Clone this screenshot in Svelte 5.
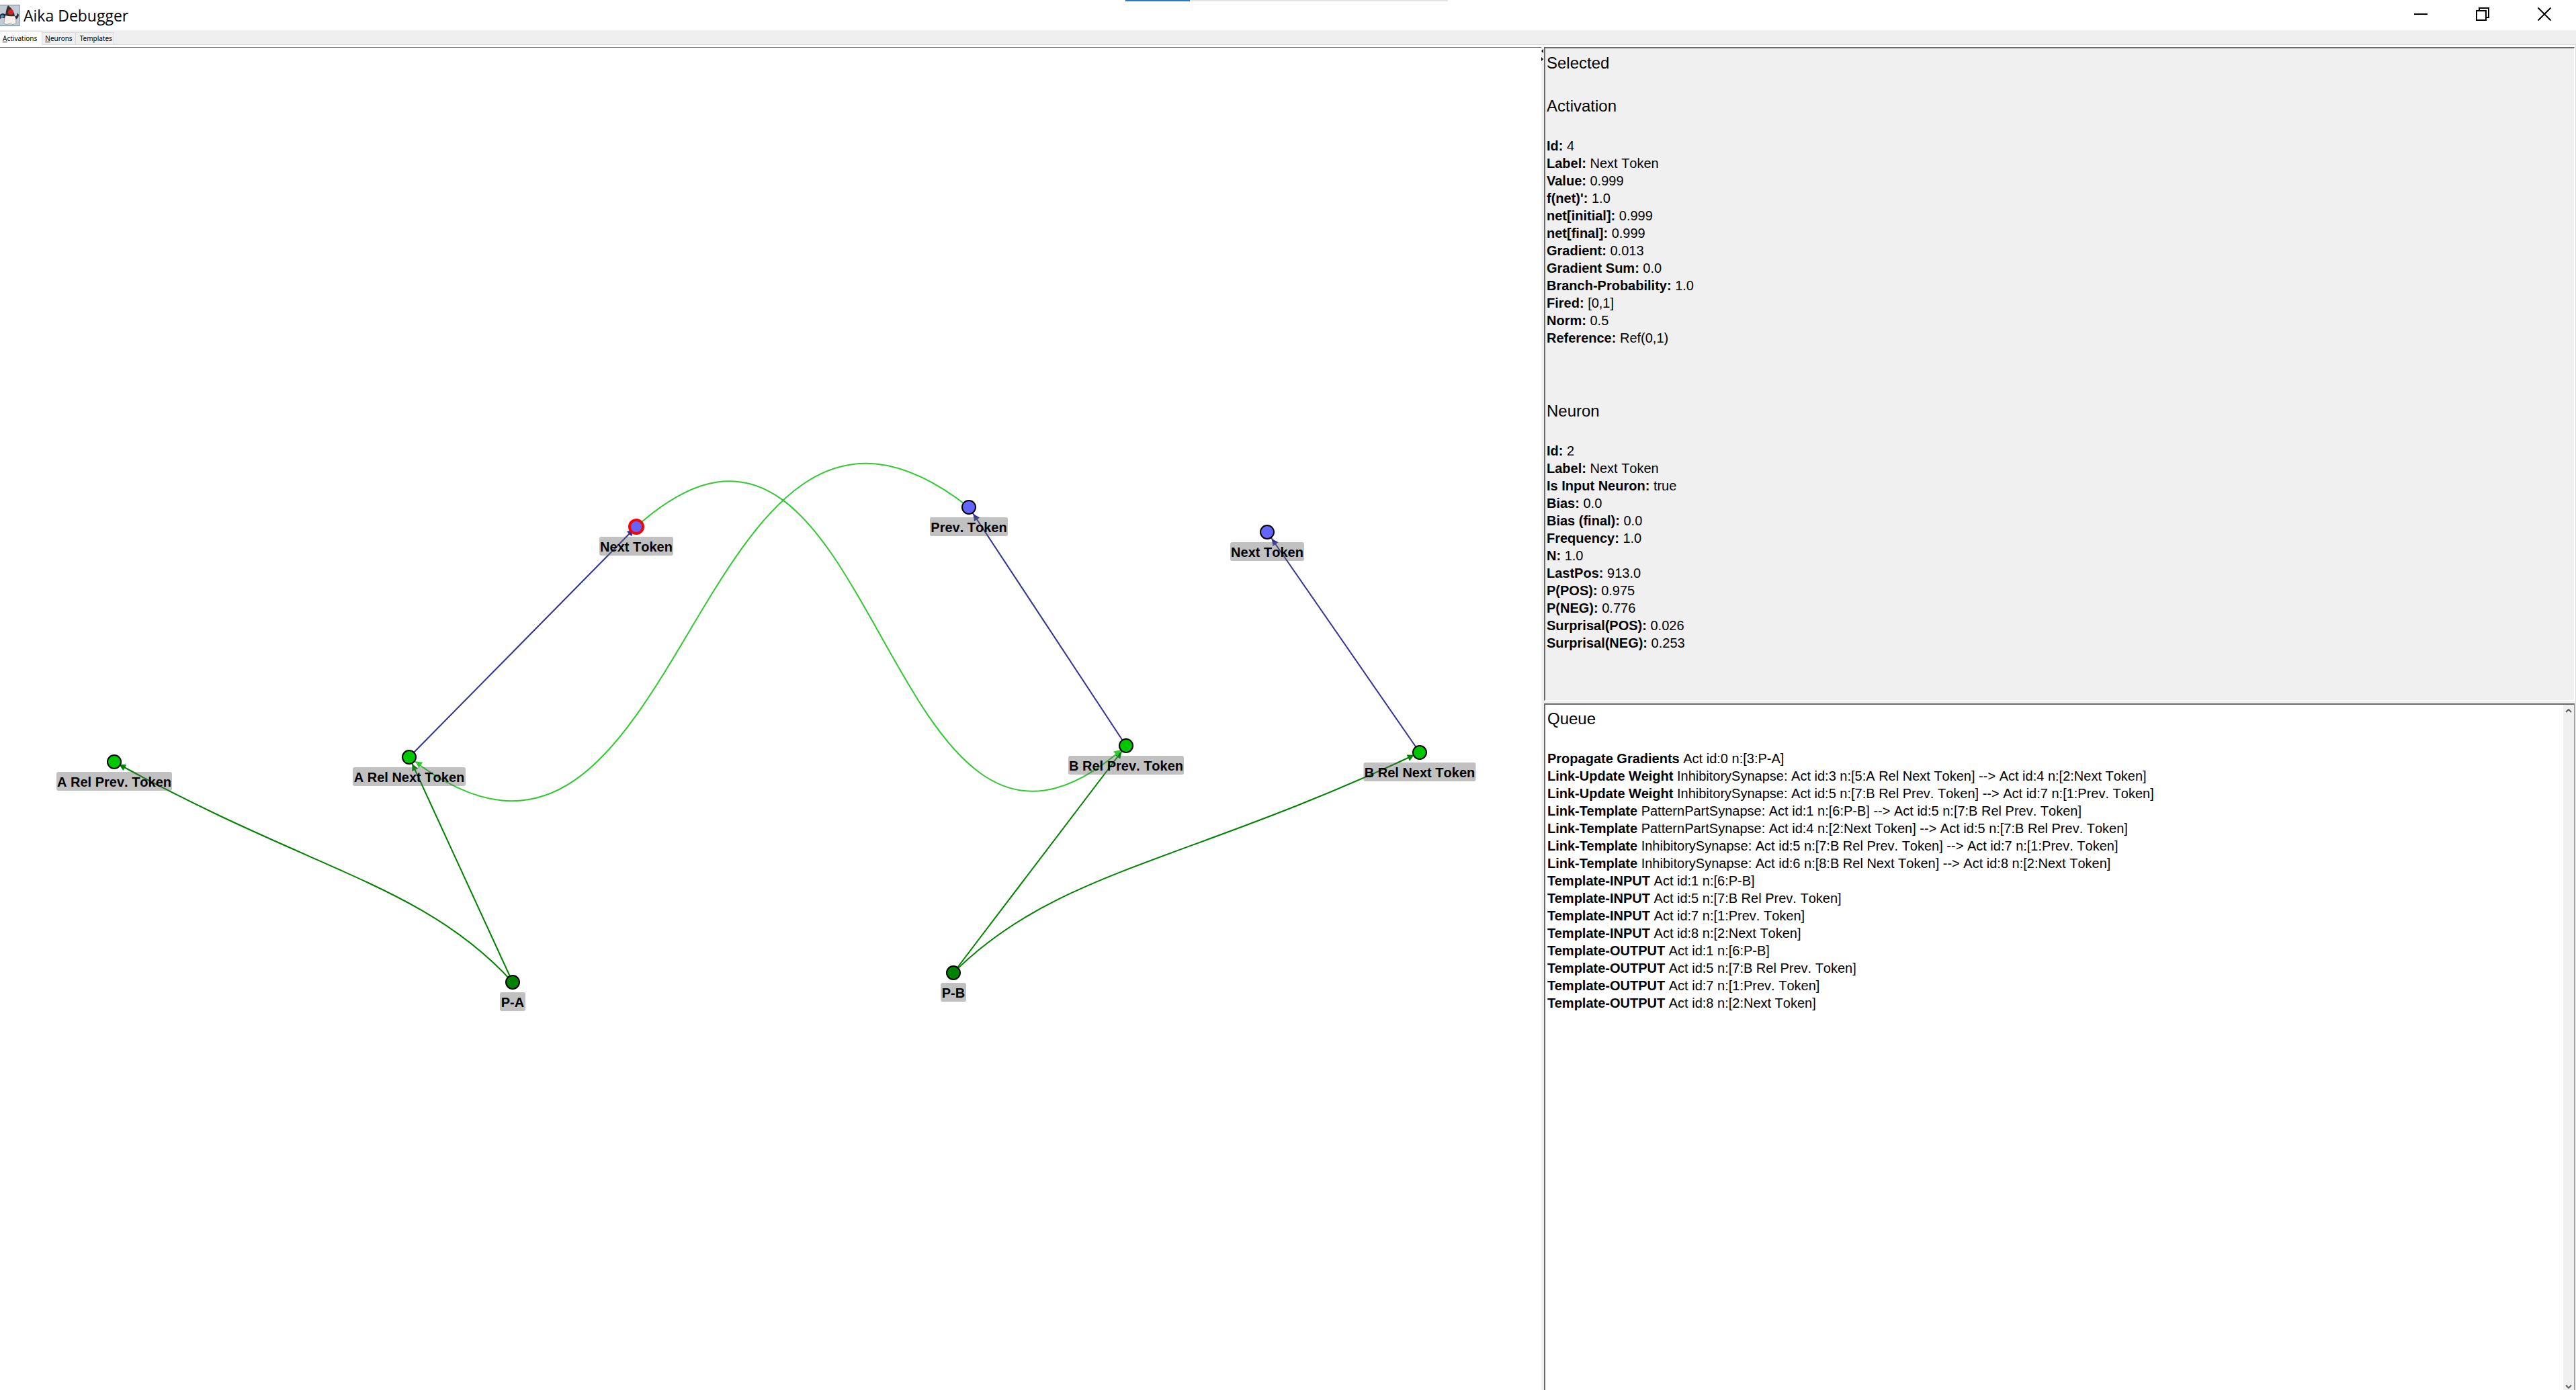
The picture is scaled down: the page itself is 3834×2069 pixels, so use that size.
<script>
  const tabs = ['Activations', 'Neurons', 'Templates'];
  const activation = [
    ['Id:', '4'], ['Label:', 'Next Token'], ['Value:', '0.999'], ["f(net)':", '1.0'],
    ['net[initial]:', '0.999'], ['net[final]:', '0.999'], ['Gradient:', '0.013'],
    ['Gradient Sum:', '0.0'], ['Branch-Probability:', '1.0'], ['Fired:', '[0,1]'],
    ['Norm:', '0.5'], ['Reference:', 'Ref(0,1)']
  ];
  const neuron = [
    ['Id:', '2'], ['Label:', 'Next Token'], ['Is Input Neuron:', 'true'], ['Bias:', '0.0'],
    ['Bias (final):', '0.0'], ['Frequency:', '1.0'], ['N:', '1.0'], ['LastPos:', '913.0'],
    ['P(POS):', '0.975'], ['P(NEG):', '0.776'], ['Surprisal(POS):', '0.026'],
    ['Surprisal(NEG):', '0.253']
  ];
  const queue = [
    ['Propagate Gradients', 'Act id:0 n:[3:P-A]'],
    ['Link-Update Weight', 'InhibitorySynapse: Act id:3 n:[5:A Rel Next Token] --> Act id:4 n:[2:Next Token]'],
    ['Link-Update Weight', 'InhibitorySynapse: Act id:5 n:[7:B Rel Prev. Token] --> Act id:7 n:[1:Prev. Token]'],
    ['Link-Template', 'PatternPartSynapse: Act id:1 n:[6:P-B] --> Act id:5 n:[7:B Rel Prev. Token]'],
    ['Link-Template', 'PatternPartSynapse: Act id:4 n:[2:Next Token] --> Act id:5 n:[7:B Rel Prev. Token]'],
    ['Link-Template', 'InhibitorySynapse: Act id:5 n:[7:B Rel Prev. Token] --> Act id:7 n:[1:Prev. Token]'],
    ['Link-Template', 'InhibitorySynapse: Act id:6 n:[8:B Rel Next Token] --> Act id:8 n:[2:Next Token]'],
    ['Template-INPUT', 'Act id:1 n:[6:P-B]'],
    ['Template-INPUT', 'Act id:5 n:[7:B Rel Prev. Token]'],
    ['Template-INPUT', 'Act id:7 n:[1:Prev. Token]'],
    ['Template-INPUT', 'Act id:8 n:[2:Next Token]'],
    ['Template-OUTPUT', 'Act id:1 n:[6:P-B]'],
    ['Template-OUTPUT', 'Act id:5 n:[7:B Rel Prev. Token]'],
    ['Template-OUTPUT', 'Act id:7 n:[1:Prev. Token]'],
    ['Template-OUTPUT', 'Act id:8 n:[2:Next Token]']
  ];

  // Canvas coordinates start below the tab strip.
  const nodes = [
    { x: 170, y: 1063, w: 172, label: 'A Rel Prev. Token', kind: 'part' },
    { x: 609, y: 1056, w: 168, label: 'A Rel Next Token', kind: 'part' },
    { x: 763, y: 1391, w: 38, label: 'P-A', kind: 'pattern' },
    { x: 947, y: 713, w: 110, label: 'Next Token', kind: 'input selected' },
    { x: 1442, y: 684, w: 116, label: 'Prev. Token', kind: 'input' },
    { x: 1419, y: 1377, w: 38, label: 'P-B', kind: 'pattern' },
    { x: 1676, y: 1039, w: 172, label: 'B Rel Prev. Token', kind: 'part' },
    { x: 1886, y: 721, w: 110, label: 'Next Token', kind: 'input' },
    { x: 2113, y: 1049, w: 167, label: 'B Rel Next Token', kind: 'part' }
  ];
  const edges = [
    { kind: 'blue', from: [609, 1056], to: [947, 713], gap: 5 },
    { kind: 'blue', from: [1676, 1039], to: [1442, 684], gap: 12 },
    { kind: 'blue', from: [2113, 1049], to: [1886, 721], gap: 12 },
    { kind: 'green', from: [763, 1391], to: [609, 1056], gap: 11 },
    { kind: 'green', from: [763, 1391], to: [170, 1063], via: [630, 1245, 467, 1227], gap: 8 },
    { kind: 'green', from: [1419, 1377], to: [1676, 1039], gap: 11 },
    { kind: 'green', from: [1419, 1377], to: [2113, 1049], via: [1572, 1224, 1766, 1213], gap: 9 },
    { kind: 'lime', from: [947, 713], to: [1676, 1039], via: [1311, 386, 1311, 1366], gap: 10 },
    { kind: 'lime', from: [1442, 684], to: [609, 1056], via: [1025, 357, 1025, 1383], gap: 11 }
  ].map((e) => {
    const [x0, y0] = e.from;
    const [x1, y1] = e.to;
    const v = e.via ?? [x0, y0, x1, y1];
    const bx = e.via ? v[2] : x0;
    const by = e.via ? v[3] : y0;
    const t = 0.96;
    let ang = Math.atan2(y1 - by, x1 - bx);
    if (e.kind === 'lime') {
      const u = 1 - t;
      const px = u * u * u * x0 + 3 * u * u * t * v[0] + 3 * u * t * t * v[2] + t * t * t * x1;
      const py = u * u * u * y0 + 3 * u * u * t * v[1] + 3 * u * t * t * v[3] + t * t * t * y1;
      ang = Math.atan2(y1 - py, x1 - px);
    }
    const pt = (d, s) =>
      `${x1 - d * Math.cos(ang) - s * Math.sin(ang)} ${y1 - d * Math.sin(ang) + s * Math.cos(ang)}`;
    return {
      kind: e.kind,
      d: e.via
        ? `M${x0} ${y0}C${v[0]} ${v[1]} ${v[2]} ${v[3]} ${x1} ${y1}`
        : `M${x0} ${y0}L${x1} ${y1}`,
      arrow: `M${pt(e.gap, 0)}L${pt(e.gap + 10, 5)}L${pt(e.gap + 10, -5)}Z`
    };
  });
</script>

{#snippet fields(rows)}
  <dl>
    {#each rows as [name, value]}
      <div><dt>{name}</dt> <dd>{value}</dd></div>
    {/each}
  </dl>
{/snippet}

<div class="window">
  <header>
    <svg class="logo" viewBox="0 0 30 32" width="30" height="32" aria-hidden="true">
      <rect x="-2" y="0.5" width="31" height="31" fill="#c3ccd6" stroke="#6d8296" />
      <path d="M0 15Q4 11 9 15L8 21Q4 18 0 21Z" fill="#1d2b38" />
      <path d="M1 16L5 15L6 18L1 20Z" fill="#4f93c8" />
      <path d="M20 16Q25 20 26 12L28 15Q27 23 20 22Z" fill="#2a2a2a" />
      <path d="M9 14Q6 20 6 28Q10 31 14 28Q19 31 24 28Q25 21 20 13Z" fill="#f2f1ed" stroke="#777" stroke-width="0.6" />
      <path d="M12 1Q9 6 8 16Q14 18 22 17Q21 8 12 1Z" fill="#30302e" />
      <circle cx="16" cy="11" r="4" fill="#dd1f22" />
    </svg>
    <h1>Aika Debugger</h1>
    <div class="progress"><span></span></div>
    <div class="controls">
      <button aria-label="Minimize"><svg viewBox="0 0 20 20" width="20" height="20"><path d="M0 10H20" /></svg></button>
      <button aria-label="Restore"><svg viewBox="0 0 20 20" width="20" height="20"><path d="M1 5H15V19H1ZM5 5V1H19V15H15" /></svg></button>
      <button aria-label="Close"><svg viewBox="0 0 20 20" width="20" height="20"><path d="M0.500 0.500L19.500 19.500M19.500 0.500L0.500 19.500" /></svg></button>
    </div>
  </header>

  <div class="tabs" role="tablist">
    {#each tabs as tab, i}
      <button role="tab" aria-selected={i === 0} class:active={i === 0}>
        {#if i < 2}<u>{tab[0]}</u>{tab.slice(1)}{:else}{tab}{/if}
      </button>
    {/each}
  </div>

  <main>
    <section class="graph" aria-label="Activation graph">
      <svg class="edges" aria-hidden="true">
        {#each edges as e}
          <g class={e.kind}>
            <path class="line" d={e.d} />
            <path class="arrow" d={e.arrow} />
          </g>
        {/each}
      </svg>
      {#each nodes as n}
        <div class="node {n.kind}" style="left:{n.x}px;top:{n.y}px">
          <i></i>
          <span style="width:{n.w}px">{n.label}</span>
        </div>
      {/each}
    </section>
    <div class="divider">
      <svg viewBox="0 0 3 20" width="3" height="20" aria-hidden="true"><path d="M3 0V6L0 3ZM0 12V18L3 15Z" /></svg>
    </div>
    <div class="side">
      <section class="details">
        <h2>Selected</h2>
        <h2>Activation</h2>
        {@render fields(activation)}
        <h2 class="spaced">Neuron</h2>
        {@render fields(neuron)}
      </section>
      <section class="queue">
        <div class="content">
          <h2>Queue</h2>
          {@render fields(queue)}
        </div>
        <div class="scroll" aria-hidden="true">
          <svg viewBox="0 0 10 6" width="10" height="6"><path d="M1 5L5 1L9 5" /></svg>
          <svg viewBox="0 0 10 6" width="10" height="6"><path d="M1 1L5 5L9 1" /></svg>
        </div>
      </section>
    </div>
  </main>
</div>

<style>
  :global(body) { background: #fff; }
  .window {
    height: 100vh;
    display: flex;
    flex-direction: column;
    overflow: hidden;
    font-family: 'Liberation Sans', Arial, sans-serif;
    color: #000;
  }
  header {
    position: relative;
    display: flex;
    align-items: center;
    height: 45px;
    padding-right: 1px;
    flex: none;
  }
  .logo { display: block; }
  h1 {
    margin: 0 0 0 5px;
    font: 400 23px/32px 'Open Sans', 'Noto Sans', sans-serif;
    flex: 1;
  }
  .progress {
    position: absolute;
    top: 0;
    left: 1675px;
    width: 480px;
    height: 2px;
    background: #e3e3e3;
  }
  .progress span { display: block; width: 96px; height: 2px; background: #2b78c8; }
  .controls { display: flex; align-self: flex-start; }
  .controls button {
    width: 92px;
    height: 42px;
    padding: 0;
    border: 0;
    background: none;
    display: grid;
    place-items: center;
  }
  .controls path { fill: none; stroke: #000; stroke-width: 2; }
  .tabs {
    display: flex;
    align-items: flex-end;
    height: 21px;
    flex: none;
    background: #efefef;
    border-bottom: 1px solid #d9d9d9;
  }
  .tabs button {
    height: 18px;
    padding: 0 4px;
    border: 1px solid #d9d9d9;
    border-left: 0;
    border-bottom: 0;
    background: #f0f0f0;
    font: 10px/17px 'Noto Sans', sans-serif;
    color: #000;
  }
  .tabs button:last-child { padding-left: 6px; padding-right: 2px; }
  .tabs .active {
    height: 21px;
    margin-bottom: -1px;
    padding-right: 7px;
    background: #fff;
  }
  main {
    flex: 1;
    min-height: 0;
    display: flex;
    padding: 3px 1px 0 0;
    border-right: 1px solid #d9d9d9;
  }
  .graph {
    position: relative;
    flex: 2294;
    min-width: 0;
    border-top: 1px solid #696969;
    overflow: hidden;
  }
  .edges { display: block; width: 100%; height: 100%; }
  .line { fill: none; stroke-width: 2; }
  .blue .line { stroke: #323296; }
  .green .line { stroke: #008200; }
  .lime .line { stroke: #32c832; }
  .blue .arrow { fill: #323296; }
  .green .arrow { fill: #008200; }
  .lime .arrow { fill: #32c832; }
  .node { position: absolute; width: 0; height: 0; }
  .node i {
    position: absolute;
    left: -11px;
    top: -11px;
    width: 18px;
    height: 18px;
    border: 2px solid #000;
    border-radius: 50%;
  }
  .part i { background: #00c800; }
  .pattern i { background: #008200; }
  .input i { background: #6464ff; }
  .selected i { left: -12px; top: -12px; width: 16px; height: 16px; border: 4px solid #f00; }
  .node span {
    position: absolute;
    left: 0;
    top: 15px;
    transform: translateX(-50%);
    height: 28px;
    border-radius: 3px;
    background: rgb(100 100 100 / 40%);
    font: 700 20px/30px 'Liberation Sans', Arial, sans-serif;
    font-kerning: none;
    text-align: center;
    white-space: nowrap;
  }
  .divider { flex: none; width: 4px; background: #f0f0f0; }
  .divider svg { display: block; margin-top: 3px; }
  .side {
    flex: 1534;
    min-width: 0;
    display: flex;
    flex-direction: column;
    background: #f0f0f0;
    font-kerning: none;
  }
  h2 { margin: 0; font-size: 24px; line-height: 28px; font-weight: 400; }
  .details {
    border-top: 2px solid #696969;
    border-left: 2px solid #696969;
    border-bottom: 1px solid #fff;
    border-right: 1px solid #fff;
    padding: 8px 2px 72px 2px;
  }
  .details h2 + h2 { margin-top: 36px; }
  .details h2.spaced { margin-top: 82px; }
  dl { margin: 32px 0 0; font-size: 20px; line-height: 26px; }
  dt, dd { display: inline; margin: 0; }
  dt { font-weight: 700; font-kerning: normal; }
  .queue {
    flex: 1;
    min-height: 0;
    display: flex;
    margin-top: 4px;
    border-top: 2px solid #696969;
    border-left: 2px solid #696969;
    border-right: 1px solid #828087;
    background: #fff;
  }
  .content { flex: 1; padding: 7px 3px; }
  .scroll {
    width: 16px;
    background: #f0f0f0;
    display: flex;
    flex-direction: column;
    justify-content: space-between;
    align-items: center;
    padding: 6px 0 2px;
    box-sizing: border-box;
  }
  .scroll path { fill: none; stroke: #606060; stroke-width: 2; }
</style>
